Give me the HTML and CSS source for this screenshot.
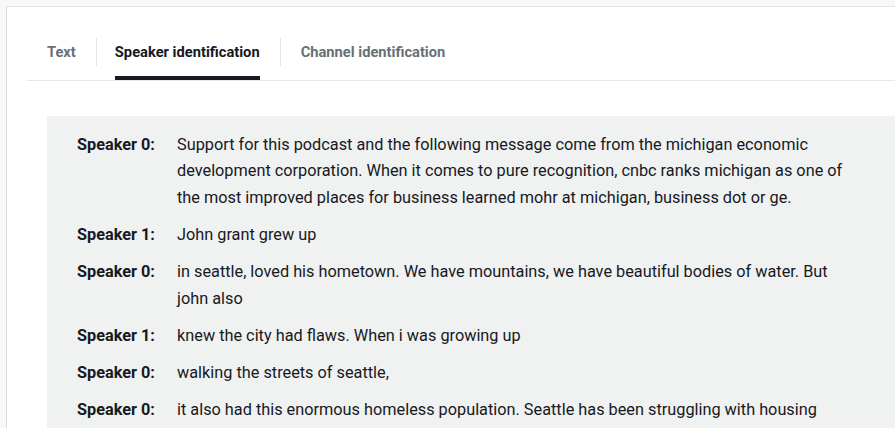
FILE: index.html
```html
<!DOCTYPE html>
<html>
<head>
<meta charset="utf-8">
<link rel="stylesheet" href="styles.css">
</head>
<body>
<div class="frame">
  <div class="card">
    <div class="tabs">
      <div class="tab first">Text</div>
      <div class="sep"></div>
      <div class="tab active">Speaker identification</div>
      <div class="sep"></div>
      <div class="tab last">Channel identification</div>
    </div>
    <div class="transcript">
      <div class="row"><div class="who">Speaker 0:</div><div class="said">Support for this podcast and the following message come from the michigan economic development corporation. When it comes to pure recognition, cnbc ranks michigan as one of the most improved places for business learned mohr at michigan, business dot or ge.</div></div>
      <div class="row"><div class="who">Speaker 1:</div><div class="said">John grant grew up</div></div>
      <div class="row"><div class="who">Speaker 0:</div><div class="said">in seattle, loved his hometown. We have mountains, we have beautiful bodies of water. But john also</div></div>
      <div class="row"><div class="who">Speaker 1:</div><div class="said">knew the city had flaws. When i was growing up</div></div>
      <div class="row"><div class="who">Speaker 0:</div><div class="said">walking the streets of seattle,</div></div>
      <div class="row"><div class="who">Speaker 0:</div><div class="said">it also had this enormous homeless population. Seattle has been struggling with housing</div></div>
    </div>
  </div>
</div>
</body>
</html>
```
FILE: styles.css
```css
html, body {
  margin: 0;
  padding: 0;
  height: 100%;
  overflow: hidden;
}
body {
  background: #f8f8f8;
  font-family: Roboto, "Liberation Sans", sans-serif;
  color: #16191f;
}
.frame {
  padding: 6px 0 0 6px;
  height: 100%;
  box-sizing: border-box;
}
.card {
  background: #fff;
  border-top: 1px solid #e4e6e6;
  border-left: 1px solid #d5dbdb;
  height: 100%;
  padding: 0 0 0 20px;
  box-sizing: border-box;
  overflow: hidden;
}
.tabs {
  display: flex;
  align-items: stretch;
  margin-top: 30px;
  border-bottom: 1px solid #e4e7e7;
  height: 43px;
}
.tab {
  font-size: 14.7px;
  font-weight: 700;
  color: #687078;
  padding: 0 20px 0 18px;
  line-height: 30px;
  box-sizing: border-box;
}
.tab.first {
  padding-left: 20px;
}
.tab.last {
  padding-left: 20px;
}
.tab.active {
  color: #16191f;
  position: relative;
}
.tab.active::after {
  content: "";
  position: absolute;
  left: 18px;
  right: 20px;
  bottom: 0;
  height: 4px;
  background: #16191f;
}
.sep {
  width: 1px;
  background: #e4e7e7;
  height: 28px;
  margin-top: 1px;
}
.transcript {
  margin: 35px 0 0 20px;
  background: #f0f1f1;
  padding: 16px 0 0 30px;
  height: 400px;
}
.row {
  display: flex;
  font-size: 16.3px;
  line-height: 26.4px;
  margin-bottom: 10.8px;
}
.who {
  font-weight: 700;
  width: 100px;
  flex: none;
}
.said {
  width: 680px;
}
```
